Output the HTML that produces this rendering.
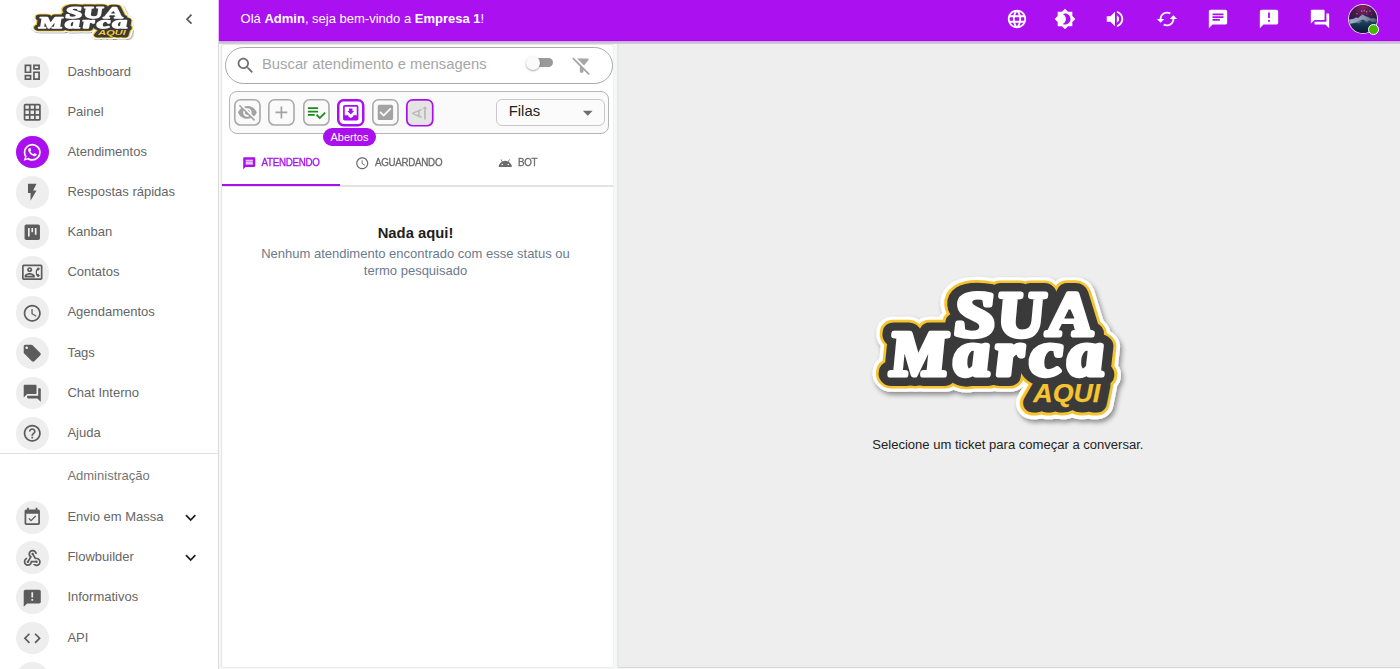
<!DOCTYPE html>
<html lang="pt-BR">
<head>
<meta charset="utf-8">
<title>Atendimentos</title>
<style>
*{box-sizing:border-box;margin:0;padding:0}
html,body{width:1400px;height:669px;overflow:hidden;background:#fff;font-family:"Liberation Sans",sans-serif;}
body{position:relative}
svg{display:block}
/* drawer */
#drawer{position:absolute;left:0;top:0;width:219px;height:669px;background:#fff;border-right:1px solid #dcdcdc;overflow:hidden}
.mi{position:absolute;left:0;width:218px;height:40px}
.mi .av{position:absolute;left:16.200px;top:4.200px;width:32.600px;height:32.600px;border-radius:50%;background:#eeeeee;display:flex;align-items:center;justify-content:center}
.mi .av svg{width:20.500px;height:20.500px;fill:#5c5c5c;margin-left:.3px;margin-top:.3px}
.mi.act .av{background:#aa10ee}
.mi.act .av svg{fill:#fff}
.mi .tx{position:absolute;left:67.400px;top:0;line-height:40px;font-size:13px;color:#666;white-space:nowrap}
.mi .ex{position:absolute;left:180.400px;top:9.700px;width:21.300px;height:21.300px;fill:#222}
#divd{position:absolute;left:0;top:453px;width:218px;height:1px;background:#e0e0e0}
#adm{position:absolute;left:67.400px;top:468px;font-size:13px;color:#757575;line-height:16px}
/* appbar */
#appbar{position:absolute;left:219px;top:0;width:1181px;height:40px;background:#aa10f0}
#ab1,#ab2,#ab3,#ab4{position:absolute;left:219px;width:1181px;height:1px}
#ab1{top:40px;background:#9f10e0}#ab2{top:41px;background:#d9a2f5}#ab3{top:42px;background:#cdbcd8}#ab4{top:43px;background:#cfcfcf}
#hello{position:absolute;left:21.600px;top:0;line-height:38px;font-size:13px;color:#fff;white-space:nowrap}
.tb{position:absolute;top:7.8px;width:22px;height:22px;fill:#fff}
#avatar{position:absolute;left:1130px;top:4.700px;width:28px;height:28px;border-radius:50%;box-shadow:0 0 0 1px #ecccfa;overflow:hidden;background:#345}
#online{position:absolute;left:1149px;top:23.500px;width:11px;height:11px;border-radius:50%;background:#44b700;border:1.500px solid #fff}
/* main */
#main{position:absolute;left:219px;top:42px;width:1181px;height:627px;background:#f6f7f7}
#right{position:absolute;left:398px;top:2px;width:783px;height:624px;background:#eeeeee;border-left:2px solid #e6e8e8;border-bottom:1px solid #d8d8d8}
#tickets{position:absolute;left:2px;top:2px;width:393px;height:623.500px;background:#fff;border:1px solid #e6e6e6;border-right-color:#f0f1f1;border-bottom-color:#ececec;border-radius:3px}

.abs{position:absolute;overflow:visible}
#search{position:absolute;left:225px;top:47px;width:387.500px;height:37px;border:1px solid #a9a9a9;border-radius:19px;background:#fff}
#ph{position:absolute;left:262px;top:45.600px;line-height:36px;font-size:14.8px;color:#a6a6a6;white-space:nowrap}
#swtrack{position:absolute;left:532px;top:58px;width:21px;height:9px;border-radius:4.500px;background:#9a9a9a}
#swthumb{position:absolute;left:526.400px;top:56px;width:14px;height:14px;border-radius:50%;background:#fafafa;box-shadow:0 1px 2px rgba(0,0,0,.35)}
#toolbar{position:absolute;left:229px;top:91px;width:380px;height:43px;border:1px solid #b5b5b5;border-radius:8px;background:#fafafa}
.fb{position:absolute;top:99.200px;width:27px;height:27px;border:1.700px solid #a8a8a8;border-radius:7px;display:flex;align-items:center;justify-content:center}
.fb svg{width:20.500px;height:20.500px;flex:none}
#tip{position:absolute;left:323px;top:128px;width:53px;height:18px;border-radius:9px;background:#aa10ee;color:#fff;font-size:11px;line-height:18px;text-align:center}
#filas{position:absolute;left:496px;top:99px;width:109px;height:27px;border:1px solid #c8c8c8;border-radius:6px;background:#fbfbfb;font-size:14.800px;line-height:23.400px;padding-left:11.800px;color:#222}
.tab{position:absolute;top:156.300px;line-height:14px;font-size:9.800px;color:#6b6b6b;white-space:nowrap;font-weight:400;-webkit-text-stroke:.3px currentColor;letter-spacing:-.3px;transform:scaleY(1.02);transform-origin:0 50%}
#tabline{position:absolute;left:222px;top:184.500px;width:391px;height:2px;background:#e2e2e2}
#tabind{position:absolute;left:222px;top:184px;width:118px;height:2px;background:#aa10ee}
#nada{position:absolute;left:222px;top:224.500px;width:387px;text-align:center;font-size:14.800px;font-weight:700;color:#1e1e1e;line-height:17px}
#nenhum{position:absolute;left:222px;top:244.500px;width:387px;text-align:center;font-size:13px;color:#6b7a8e;line-height:17.200px}
#sel{position:absolute;left:616.400px;top:437px;width:783px;text-align:center;font-size:13.060px;color:#222;line-height:15px}
</style>
</head>
<body>
<div id="main">
  <div id="tickets"></div>
  <div id="right"></div>
</div>
<!--PANEL-->
<div id="search"></div>
<svg class="abs" style="left:235px;top:55.300px;width:21px;height:21px;fill:#727272" viewBox="0 0 24 24"><path d="M15.5 14h-.79l-.28-.27C15.41 12.59 16 11.11 16 9.5 16 5.91 13.09 3 9.5 3S3 5.91 3 9.5 5.91 16 9.5 16c1.610 0 3.090-.59 4.230-1.570l.27.28v.79l5 4.990L20.490 19l-4.990-5zm-6 0C7.010 14 5 11.990 5 9.500S7.010 5 9.500 5 14 7.010 14 9.500 11.990 14 9.500 14z"/></svg>
<div id="ph">Buscar atendimento e mensagens</div>
<div id="swtrack"></div><div id="swthumb"></div>
<svg class="abs" style="left:570.500px;top:55.100px;width:21.300px;height:21.300px;fill:#a6a6a6" viewBox="0 0 24 24"><path d="M19.79 5.61C20.3 4.950 19.830 4 19 4H6.830l7.840 7.840 5.120-6.230zM2.810 2.810 1.390 4.220 10 13v6c0 .55.45 1 1 1h2c.55 0 1-.45 1-1v-2.170l5.780 5.780 1.410-1.410L2.810 2.810z"/></svg>
<div id="toolbar"></div>
<svg class="abs" style="left:233.5px;top:99.10px;width:26.8px;height:26.8px" viewBox="0 0 26.8 26.8"><rect x="0.80" y="0.80" width="25.20" height="25.20" rx="5.7" fill="#fafafa" stroke="#a9a9a9" stroke-width="1.6"/><svg x="3.15" y="3.15" width="20.5" height="20.5" viewBox="0 0 24 24"><path fill="#a3a3a3" d="M12 7c2.76 0 5 2.240 5 5 0 .65-.13 1.260-.36 1.830l2.920 2.920c1.510-1.260 2.700-2.890 3.430-4.750-1.730-4.390-6-7.500-11-7.500-1.400 0-2.740.25-3.980.7l2.160 2.160C10.740 7.130 11.350 7 12 7zM2 4.270l2.280 2.280.46.46C3.080 8.300 1.780 10.020 1 12c1.730 4.390 6 7.500 11 7.500 1.550 0 3.030-.3 4.380-.84l.42.42L19.730 22 21 20.730 3.270 3 2 4.270zM7.530 9.800l1.550 1.550c-.05.21-.08.43-.08.65 0 1.660 1.340 3 3 3 .22 0 .44-.03.65-.08l1.550 1.550c-.67.33-1.410.53-2.200.53-2.760 0-5-2.240-5-5 0-.79.2-1.530.53-2.200zm4.310-.78l3.150 3.150.02-.16c0-1.660-1.340-3-3-3l-.17.010z"/></svg></svg>
<svg class="abs" style="left:267.9px;top:99.10px;width:26.8px;height:26.8px" viewBox="0 0 26.8 26.8"><rect x="0.80" y="0.80" width="25.20" height="25.20" rx="5.7" fill="#fafafa" stroke="#a9a9a9" stroke-width="1.6"/><svg x="3.15" y="3.15" width="20.5" height="20.5" viewBox="0 0 24 24"><path fill="#a3a3a3" d="M19 13h-6v6h-2v-6H5v-2h6V5h2v6h6v2z"/></svg></svg>
<svg class="abs" style="left:302.7px;top:99.10px;width:26.8px;height:26.8px" viewBox="0 0 26.8 26.8"><rect x="0.80" y="0.80" width="25.20" height="25.20" rx="5.7" fill="#fafafa" stroke="#a9a9a9" stroke-width="1.6"/><svg x="3.15" y="3.15" width="20.5" height="20.5" viewBox="0 0 24 24"><path fill="#1a8a1a" d="M14 10H2v2h12v-2zm0-4H2v2h12V6zM2 16h8v-2H2v2zm19.500-4.500L23 13l-6.990 7-4.510-4.500L13 14l3.010 3 5.490-5.500z"/></svg></svg>
<svg class="abs" style="left:336.9px;top:98.75px;width:27.5px;height:27.5px" viewBox="0 0 27.5 27.5"><rect x="1.25" y="1.25" width="25.00" height="25.00" rx="5.2" fill="#ffffff" stroke="#aa10ee" stroke-width="2.5"/><svg x="3.50" y="3.50" width="20.5" height="20.5" viewBox="0 0 24 24"><path fill="#aa10ee" d="M19 3H4.990c-1.110 0-1.980.9-1.980 2L3 19c0 1.100.88 2 1.990 2H19c1.100 0 2-.9 2-2V5c0-1.100-.9-2-2-2zm0 12h-4c0 1.660-1.350 3-3 3s-3-1.340-3-3H4.990V5H19v10zm-3-5h-2V7h-4v3H8l4 4 4-4z"/></svg></svg>
<svg class="abs" style="left:372.1px;top:99.10px;width:26.8px;height:26.8px" viewBox="0 0 26.8 26.8"><rect x="0.80" y="0.80" width="25.20" height="25.20" rx="5.7" fill="#fafafa" stroke="#a9a9a9" stroke-width="1.6"/><svg x="3.15" y="3.15" width="20.5" height="20.5" viewBox="0 0 24 24"><path fill="#a3a3a3" d="M19 3H5c-1.110 0-2 .9-2 2v14c0 1.100.89 2 2 2h14c1.110 0 2-.9 2-2V5c0-1.100-.89-2-2-2zm-9 14l-5-5 1.410-1.410L10 14.170l7.590-7.590L19 8l-9 9z"/></svg></svg>
<svg class="abs" style="left:406.1px;top:98.70px;width:27.6px;height:27.6px" viewBox="0 0 27.6 27.6"><rect x="0.85" y="0.85" width="25.90" height="25.90" rx="5.7" fill="#e4e4e4" stroke="#aa10ee" stroke-width="1.7"/><svg x="3.55" y="3.55" width="20.5" height="20.5" viewBox="0 0 24 24"><path fill="#b9b9b9" d="M3 12v1.500l11 4.750v-2.100l-2.200-.9v-5l2.200-.9v-2.100L3 12zm7 2.620l-5.020-1.870L10 10.880v3.740zm8-10.370l-3 3h2v12.500h2V7.250h2l-3-3z"/></svg></svg>
<div id="tip">Abertos</div>
<div id="filas">Filas</div>
<svg class="abs" style="left:575.800px;top:100.500px;width:23.500px;height:23.500px;fill:#6e6e6e" viewBox="0 0 24 24"><path d="M7 10l5 5 5-5z"/></svg>
<svg class="abs" style="left:241.500px;top:156px;width:14.500px;height:14.500px;fill:#aa10ee" viewBox="0 0 24 24"><path d="M20 2H4c-1.100 0-1.990.9-1.990 2L2 22l4-4h14c1.100 0 2-.9 2-2V4c0-1.100-.9-2-2-2zm-2 12H6v-2h12v2zm0-3H6V9h12v2zm0-3H6V6h12v2z"/></svg>
<div class="tab" style="left:261.500px;color:#aa10ee">ATENDENDO</div>
<svg class="abs" style="left:354.800px;top:156.300px;width:14.500px;height:14.500px;fill:#6b6b6b" viewBox="0 0 24 24"><path d="M11.99 2C6.47 2 2 6.480 2 12s4.470 10 9.990 10C17.520 22 22 17.520 22 12S17.520 2 11.990 2zM12 20c-4.420 0-8-3.580-8-8s3.580-8 8-8 8 3.580 8 8-3.580 8-8 8zm.5-13H11v6l5.250 3.150.75-1.230-4.500-2.670z"/></svg>
<div class="tab" style="left:375px">AGUARDANDO</div>
<svg class="abs" style="left:498px;top:156px;width:14.500px;height:14.500px;fill:#6b6b6b" viewBox="0 0 24 24"><path d="m17.6 9.480 1.840-3.180c.16-.31.04-.69-.26-.85-.29-.15-.65-.06-.83.22l-1.880 3.240c-2.860-1.210-6.080-1.210-8.940 0L5.650 5.670c-.19-.29-.58-.38-.87-.2-.28.18-.37.54-.22.83L6.400 9.480C3.300 11.250 1.280 14.440 1 18h22c-.28-3.560-2.300-6.750-5.400-8.520zM7 15.250c-.69 0-1.250-.56-1.250-1.250s.56-1.250 1.250-1.250 1.250.56 1.250 1.250-.56 1.250-1.250 1.250zm10 0c-.69 0-1.250-.56-1.250-1.250s.56-1.250 1.250-1.250 1.250.56 1.250 1.250-.56 1.250-1.250 1.250z"/></svg>
<div class="tab" style="left:518px">BOT</div>
<div id="tabline"></div><div id="tabind"></div>
<div id="nada">Nada aqui!</div>
<div id="nenhum">Nenhum atendimento encontrado com esse status ou<br>termo pesquisado</div>
<div id="sel">Selecione um ticket para começar a conversar.</div>
<svg width="0" height="0" style="position:absolute"><defs>
<filter id="lsh" x="-10%" y="-10%" width="120%" height="125%"><feGaussianBlur in="SourceAlpha" stdDeviation="2.8"/><feOffset dx="1.500" dy="2.500" result="b"/><feComponentTransfer><feFuncA type="linear" slope=".42"/></feComponentTransfer><feMerge><feMergeNode/><feMergeNode in="SourceGraphic"/></feMerge></filter>
<g id="lgtxt" font-family="Liberation Serif, serif" font-weight="700" font-style="italic" stroke-linejoin="round" stroke-linecap="round">
<text x="955.70" y="336.05" font-size="64.0" textLength="41.5" lengthAdjust="spacingAndGlyphs" transform="translate(0,336.05) skewX(5) translate(0,-336.05)">S</text>
<text x="999.05" y="336.05" font-size="64.0" textLength="47.4" lengthAdjust="spacingAndGlyphs" transform="translate(0,336.05) skewX(5) translate(0,-336.05)">U</text>
<text x="1049.70" y="334.85" font-size="62.2" textLength="45.2" lengthAdjust="spacingAndGlyphs" transform="translate(0,334.85) skewX(5) translate(0,-334.85)">A</text>
<text x="890.95" y="374.85" font-size="63.5" textLength="58.8" lengthAdjust="spacingAndGlyphs" transform="translate(0,374.85) skewX(5) translate(0,-374.85)">M</text>
<text x="955.15" y="374.85" font-size="63.5" textLength="36.0" lengthAdjust="spacingAndGlyphs" transform="translate(0,374.85) skewX(5) translate(0,-374.85)">a</text>
<text x="997.25" y="374.85" font-size="63.5" textLength="28.2" lengthAdjust="spacingAndGlyphs" transform="translate(0,374.85) skewX(5) translate(0,-374.85)">r</text>
<text x="1031.45" y="374.85" font-size="63.5" textLength="32.8" lengthAdjust="spacingAndGlyphs" transform="translate(0,374.85) skewX(5) translate(0,-374.85)">c</text>
<text x="1068.95" y="374.85" font-size="63.5" textLength="36.2" lengthAdjust="spacingAndGlyphs" transform="translate(0,374.85) skewX(5) translate(0,-374.85)">a</text>
</g>
<g id="lgaqui" font-family="Liberation Sans, sans-serif" font-weight="700" font-style="italic" stroke-linejoin="round" stroke-linecap="round">
<text x="1033.300" y="402.300" font-size="26.300" textLength="67" lengthAdjust="spacingAndGlyphs">AQUI</text>
</g>
<g id="lgaqub" font-family="Liberation Sans, sans-serif" font-weight="700" font-style="italic" stroke-linejoin="round" stroke-linecap="round">
<text x="1033.300" y="403.100" font-size="26.300" textLength="67" lengthAdjust="spacingAndGlyphs">AOUI</text>
</g>
<g id="logo">
<g filter="url(#lsh)"><use href="#lgtxt" fill="#fff" stroke="#fff" stroke-width="33.600"/><use href="#lgaqub" fill="#fff" stroke="#fff" stroke-width="32.500"/></g>
<use href="#lgtxt" fill="#f6c431" stroke="#f6c431" stroke-width="27.200"/><use href="#lgaqub" fill="#f6c431" stroke="#f6c431" stroke-width="25"/>
<use href="#lgtxt" fill="#3a3a3a" stroke="#3a3a3a" stroke-width="22"/><use href="#lgaqub" fill="#3a3a3a" stroke="#3a3a3a" stroke-width="19"/>
<use href="#lgtxt" fill="#fff" stroke="#fff" stroke-width="5.200"/>
<path d="M1070 309.800 L1065 318 H1073.700 Z" fill="#3a3a3a" stroke="#3a3a3a" stroke-width="1.200" stroke-linejoin="round"/>
<use href="#lgaqui" fill="#f6c431" stroke="#f6c431" stroke-width=".25"/>
</g>
</defs></svg>
<svg id="biglogo" viewBox="860 265 280 170" width="280" height="170" style="position:absolute;left:860px;top:265px;overflow:visible"><use href="#logo"/></svg>
<!--/PANEL-->
<div id="ab1"></div><div id="ab2"></div><div id="ab3"></div><div id="ab4"></div>
<div id="appbar">
  <div id="hello">Olá <b>Admin</b>, seja bem-vindo a <b>Empresa 1</b>!</div>
<svg class="tb" style="left:787.1px" viewBox="0 0 24 24"><path d="M11.99 2C6.47 2 2 6.48 2 12s4.47 10 9.99 10C17.52 22 22 17.52 22 12S17.52 2 11.99 2zm6.93 6h-2.95c-.32-1.25-.78-2.45-1.38-3.56 1.84.63 3.37 1.91 4.33 3.56zM12 4.040c.83 1.200 1.480 2.530 1.910 3.960h-3.820c.43-1.430 1.080-2.760 1.910-3.960zM4.260 14C4.100 13.360 4 12.690 4 12s.1-1.360.26-2h3.380c-.08.66-.14 1.320-.14 2 0 .68.06 1.340.14 2H4.260zm.82 2h2.950c.32 1.250.78 2.450 1.380 3.560-1.840-.63-3.370-1.900-4.330-3.560zm2.950-8H5.080c.96-1.660 2.490-2.930 4.330-3.560C8.810 5.550 8.350 6.750 8.030 8zM12 19.960c-.83-1.200-1.480-2.530-1.910-3.960h3.820c-.43 1.430-1.080 2.760-1.910 3.960zM14.340 14H9.660c-.09-.66-.16-1.320-.16-2 0-.68.07-1.350.16-2h4.680c.09.65.16 1.320.16 2 0 .68-.07 1.340-.16 2zm.25 5.560c.6-1.110 1.060-2.310 1.380-3.560h2.950c-.96 1.650-2.490 2.930-4.330 3.560zM16.360 14c.08-.66.14-1.320.14-2 0-.68-.06-1.340-.14-2h3.380c.16.64.26 1.310.26 2s-.1 1.360-.26 2h-3.380z"/></svg>
<svg class="tb" style="left:834.6px" viewBox="0 0 24 24"><path d="M20 8.690V4h-4.690L12 .69 8.690 4H4v4.690L.69 12 4 15.310V20h4.690L12 23.310 15.310 20H20v-4.690L23.310 12 20 8.690zM12 18c-.89 0-1.740-.2-2.500-.55C11.560 16.500 13 14.420 13 12s-1.440-4.500-3.500-5.450C10.260 6.200 11.110 6 12 6c3.310 0 6 2.690 6 6s-2.690 6-6 6z"/></svg>
<svg class="tb" style="left:885.3px" viewBox="0 0 24 24"><path d="M3 9v6h4l5 5V4L7 9H3zm13.5 3c0-1.770-1.020-3.290-2.500-4.030v8.050c1.480-.73 2.500-2.250 2.500-4.020zM14 3.230v2.060c2.890.86 5 3.540 5 6.710s-2.110 5.850-5 6.710v2.060c4.010-.91 7-4.490 7-8.770s-2.990-7.860-7-8.770z"/></svg>
<svg class="tb" style="left:936.6px" viewBox="0 0 24 24"><path d="M19 8l-4 4h3c0 3.310-2.690 6-6 6-1.010 0-1.970-.25-2.800-.7l-1.460 1.460C8.970 19.540 10.430 20 12 20c4.420 0 8-3.580 8-8h3l-4-4zM6 12c0-3.310 2.690-6 6-6 1.010 0 1.970.25 2.800.7l1.460-1.460C15.030 4.460 13.570 4 12 4c-4.420 0-8 3.580-8 8H1l4 4 4-4H6z"/></svg>
<svg class="tb" style="left:987.5px" viewBox="0 0 24 24"><path d="M20 2H4c-1.100 0-1.990.9-1.990 2L2 22l4-4h14c1.100 0 2-.9 2-2V4c0-1.100-.9-2-2-2zM6 9h12v2H6V9zm8 5H6v-2h8v2zm4-6H6V6h12v2z"/></svg>
<svg class="tb" style="left:1038.8px" viewBox="0 0 24 24"><path d="M20 2H4c-1.100 0-1.990.9-1.990 2L2 22l4-4h14c1.100 0 2-.9 2-2V4c0-1.100-.9-2-2-2zm-7 9h-2V5h2v6zm0 4h-2v-2h2v2z"/></svg>
<svg class="tb" style="left:1089.6px" viewBox="0 0 24 24"><path d="M21 6h-2v9H6v2c0 .55.45 1 1 1h11l4 4V7c0-.55-.45-1-1-1zm-4 6V3c0-.55-.45-1-1-1H3c-.55 0-1 .45-1 1v14l4-4h10c.55 0 1-.45 1-1z"/></svg>
<div id="avatar"><svg viewBox="0 0 28 28" width="28" height="28"><defs><clipPath id="avc"><circle cx="14" cy="14" r="14"/></clipPath><radialGradient id="sky" cx=".5" cy=".08" r=".55"><stop offset="0" stop-color="#8a2262"/><stop offset=".6" stop-color="#4a1a4c"/><stop offset="1" stop-color="#2e1a42"/></radialGradient><linearGradient id="mnt" x1="0" y1="0" x2="1" y2="0"><stop offset="0" stop-color="#a3aec6"/><stop offset=".55" stop-color="#8797b0"/><stop offset="1" stop-color="#3d5873"/></linearGradient><linearGradient id="low" x1="0" y1="0" x2="0" y2="1"><stop offset="0" stop-color="#2b4a66"/><stop offset=".5" stop-color="#12304b"/><stop offset="1" stop-color="#0b1c36"/></linearGradient></defs><g clip-path="url(#avc)"><rect width="28" height="28" fill="url(#sky)"/><path d="M0 14.500 L4 14 L7 12.500 L9 13 L12 10.500 L14 9.700 L16 11 L19 12 L22 13.500 L25 13 L28 14.500 V22 H0z" fill="url(#mnt)"/><path d="M0 19 L4 18.200 L8 17.300 L11 15.500 L14 14.500 L17 16 L21 15.500 L24 17 L28 16.500 V28 H0z" fill="url(#low)"/><path d="M7 17.800 L11 15.500 L13 16 L10 18.500z M15 15.500 L18 17.500 L20 17 L17 16z" fill="#7f93ad" opacity=".6"/><g fill="#f4e8ff"><circle cx="12.800" cy="6" r=".55"/><circle cx="15.200" cy="5.800" r=".5"/><circle cx="17.800" cy="6.800" r=".55"/><circle cx="21" cy="6" r=".5"/><circle cx="8" cy="8.800" r=".5"/><circle cx="13" cy="9.200" r=".35"/><circle cx="18" cy="9" r=".35"/><circle cx="22.500" cy="9.800" r=".3"/></g></g></svg></div><div id="online"></div>
</div>
<div id="drawer">
<!--SIDE-->
<svg style="position:absolute;left:0;top:0;overflow:visible" width="218" height="48"><defs><filter id="sblur" x="-5%" y="-10%" width="110%" height="120%"><feGaussianBlur stdDeviation=".38"/></filter></defs><g filter="url(#sblur)"><g transform="translate(-329.1,-68.200) scale(.4135,.2564)"><use href="#logo"/></g></g></svg>
<svg class="abs" style="left:179px;top:9.100px;width:20.400px;height:20.400px;fill:#5a5a5a" viewBox="0 0 24 24"><path d="M15.410 7.410L14 6l-6 6 6 6 1.410-1.410L10.830 12z"/></svg>

<div class="mi" style="top:51.6px"><div class="av"><svg viewBox="0 0 24 24"><path d="M19 5v2h-4V5h4M9 5v6H5V5h4m10 8v6h-4v-6h4M9 17v2H5v-2h4M21 3h-8v6h8V3zM11 3H3v10h8V3zm10 8h-8v10h8V11zm-10 4H3v6h8v-6z"/></svg></div><div class="tx">Dashboard</div></div>
<div class="mi" style="top:91.5px"><div class="av"><svg viewBox="0 0 24 24"><path d="M20 2H4c-1.1 0-2 .9-2 2v16c0 1.1.9 2 2 2h16c1.1 0 2-.9 2-2V4c0-1.1-.9-2-2-2zM8 20H4v-4h4v4zm0-6H4v-4h4v4zm0-6H4V4h4v4zm6 12h-4v-4h4v4zm0-6h-4v-4h4v4zm0-6h-4V4h4v4zm6 12h-4v-4h4v4zm0-6h-4v-4h4v4zm0-6h-4V4h4v4z"/></svg></div><div class="tx">Painel</div></div>
<div class="mi act" style="top:131.6px"><div class="av"><svg viewBox="0 0 24 24"><path d="M16.75 13.96c.25.13.41.2.46.3.06.11.04.61-.21 1.18-.2.56-1.24 1.1-1.7 1.12-.46.02-.47.36-2.96-.73-2.49-1.09-3.99-3.75-4.11-3.92-.12-.17-.96-1.38-.92-2.61.05-1.22.69-1.8.95-2.04.24-.26.51-.29.68-.26h.47c.15 0 .36-.06.55.45l.69 1.87c.06.13.1.28.01.44l-.27.41-.39.42c-.12.12-.26.25-.12.5.12.26.62 1.09 1.32 1.78.91.88 1.71 1.17 1.95 1.3.24.14.39.12.54-.04l.81-.94c.19-.25.35-.19.58-.11l1.67.88M12 2a10 10 0 0 1 10 10 10 10 0 0 1-10 10c-1.97 0-3.8-.57-5.35-1.55L2 22l1.55-4.65A9.969 9.969 0 0 1 2 12 10 10 0 0 1 12 2m0 2a8 8 0 0 0-8 8c0 1.72.54 3.31 1.46 4.61L4.5 19.5l2.89-.96A7.95 7.95 0 0 0 12 20a8 8 0 0 0 8-8 8 8 0 0 0-8-8z"/></svg></div><div class="tx">Atendimentos</div></div>
<div class="mi" style="top:171.8px"><div class="av"><svg viewBox="0 0 24 24"><path d="M7 2v11h3v9l7-12h-4l4-8z"/></svg></div><div class="tx">Respostas rápidas</div></div>
<div class="mi" style="top:212.0px"><div class="av"><svg viewBox="0 0 24 24"><path d="M19 3H5c-1.1 0-2 .9-2 2v14c0 1.1.9 2 2 2h14c1.1 0 2-.9 2-2V5c0-1.1-.9-2-2-2zM9 17H7V7h2v10zm4-5h-2V7h2v5zm4 3h-2V7h2v8z"/></svg></div><div class="tx">Kanban</div></div>
<div class="mi" style="top:252.1px"><div class="av"><svg viewBox="0 0 24 24"><path d="M22 3H2C.9 3 0 3.900 0 5v14c0 1.100.9 2 2 2h20c1.100 0 1.990-.9 1.990-2L24 5c0-1.100-.9-2-2-2zm0 16H2V5h20v14zm-2.990-1.010L21 16l-1.510-2h-1.640c-.22-.63-.35-1.300-.35-2s.13-1.370.35-2h1.640L21 8l-1.990-1.990c-1.310.98-2.280 2.370-2.730 3.990-.18.64-.28 1.310-.28 2s.1 1.360.28 2c.45 1.610 1.420 3.010 2.730 3.990zM9 12c1.650 0 3-1.350 3-3s-1.350-3-3-3-3 1.350-3 3 1.350 3 3 3zm0-4c.55 0 1 .45 1 1s-.45 1-1 1-1-.45-1-1 .45-1 1-1zm6 8.590c0-2.500-3.970-3.580-6-3.580s-6 1.080-6 3.580V18h12v-1.410zM5.480 16c.74-.5 2.220-1 3.520-1s2.770.49 3.520 1H5.480z"/></svg></div><div class="tx">Contatos</div></div>
<div class="mi" style="top:292.3px"><div class="av"><svg viewBox="0 0 24 24"><path d="M11.99 2C6.47 2 2 6.48 2 12s4.47 10 9.990 10C17.520 22 22 17.520 22 12S17.520 2 11.990 2zM12 20c-4.420 0-8-3.580-8-8s3.580-8 8-8 8 3.580 8 8-3.580 8-8 8zm.5-13H11v6l5.250 3.150.75-1.230-4.500-2.670z"/></svg></div><div class="tx">Agendamentos</div></div>
<div class="mi" style="top:332.5px"><div class="av"><svg viewBox="0 0 24 24"><path d="M21.410 11.580l-9-9C12.050 2.220 11.550 2 11 2H4c-1.100 0-2 .9-2 2v7c0 .55.22 1.050.59 1.420l9 9c.36.36.86.58 1.410.58.55 0 1.050-.22 1.410-.59l7-7c.37-.36.59-.86.59-1.410 0-.55-.23-1.060-.59-1.420zM5.500 7C4.670 7 4 6.330 4 5.500S4.670 4 5.500 4 7 4.670 7 5.500 6.330 7 5.500 7z"/></svg></div><div class="tx">Tags</div></div>
<div class="mi" style="top:372.6px"><div class="av"><svg viewBox="0 0 24 24"><path d="M21 6h-2v9H6v2c0 .55.45 1 1 1h11l4 4V7c0-.55-.45-1-1-1zm-4 6V3c0-.55-.45-1-1-1H3c-.55 0-1 .45-1 1v14l4-4h10c.55 0 1-.45 1-1z"/></svg></div><div class="tx">Chat Interno</div></div>
<div class="mi" style="top:412.8px"><div class="av"><svg viewBox="0 0 24 24"><path d="M11 18h2v-2h-2v2zm1-16C6.480 2 2 6.480 2 12s4.480 10 10 10 10-4.480 10-10S17.520 2 12 2zm0 18c-4.410 0-8-3.590-8-8s3.590-8 8-8 8 3.590 8 8-3.590 8-8 8zm0-14c-2.210 0-4 1.790-4 4h2c0-1.100.9-2 2-2s2 .9 2 2c0 2-3 1.750-3 5h2c0-2.250 3-2.500 3-5 0-2.210-1.790-4-4-4z"/></svg></div><div class="tx">Ajuda</div></div>
<div class="mi" style="top:497.0px"><div class="av"><svg viewBox="0 0 24 24"><path d="M16.530 11.060L15.470 10l-4.880 4.880-2.120-2.120-1.060 1.060L10.590 17l5.940-5.940zM19 3h-1V1h-2v2H8V1H6v2H5c-1.110 0-1.990.9-1.990 2L3 19c0 1.100.89 2 2 2h14c1.100 0 2-.9 2-2V5c0-1.100-.9-2-2-2zm0 16H5V8h14v11z"/></svg></div><div class="tx">Envio em Massa</div><svg class="ex" viewBox="0 0 24 24"><path d="M16.59 8.59L12 13.17 7.41 8.59 6 10l6 6 6-6z"/></svg></div>
<div class="mi" style="top:537.2px"><div class="av"><svg viewBox="0 0 24 24"><path d="M10 15h5.880c.27-.31.67-.5 1.120-.5.83 0 1.500.67 1.500 1.500s-.67 1.500-1.500 1.500c-.44 0-.84-.19-1.120-.5H11.900c-.46 2.280-2.480 4-4.900 4-2.760 0-5-2.240-5-5 0-2.420 1.720-4.440 4-4.900v2.070C4.840 13.580 4 14.700 4 16c0 1.650 1.350 3 3 3s3-1.350 3-3v-1zm2.500-11c1.650 0 3 1.350 3 3h2c0-2.760-2.240-5-5-5s-5 2.240-5 5c0 1.430.6 2.710 1.550 3.620l-2.350 3.900c-.68.14-1.200.75-1.200 1.480 0 .83.67 1.500 1.500 1.500s1.500-.67 1.500-1.500c0-.16-.02-.31-.07-.45l3.380-5.630C10.490 9.610 9.500 8.420 9.500 7c0-1.650 1.350-3 3-3zm4.500 9c-.64 0-1.230.2-1.720.54l-3.050-5.070C11.530 8.350 11 7.740 11 7c0-.83.67-1.500 1.500-1.500S14 6.170 14 7c0 .16-.02.31-.07.45l2.350 3.900c.24-.03.48-.05.72-.05 2.760 0 5 2.240 5 5s-2.240 5-5 5c-1.850 0-3.470-1.010-4.330-2.500h2.670c.48.320 1.050.5 1.660.5 1.650 0 3-1.350 3-3s-1.350-3-3-3z"/></svg></div><div class="tx">Flowbuilder</div><svg class="ex" viewBox="0 0 24 24"><path d="M16.59 8.59L12 13.17 7.41 8.59 6 10l6 6 6-6z"/></svg></div>
<div class="mi" style="top:577.3px"><div class="av"><svg viewBox="0 0 24 24"><path d="M20 2H4c-1.100 0-1.990.9-1.990 2L2 22l4-4h14c1.100 0 2-.9 2-2V4c0-1.100-.9-2-2-2zm-7 9h-2V5h2v6zm0 4h-2v-2h2v2z"/></svg></div><div class="tx">Informativos</div></div>
<div class="mi" style="top:617.5px"><div class="av"><svg viewBox="0 0 24 24"><path d="M9.4 16.6L4.8 12l4.600-4.600L8 6l-6 6 6 6 1.400-1.400zm5.200 0l4.600-4.600-4.600-4.600L16 6l6 6-6 6-1.400-1.400z"/></svg></div><div class="tx">API</div></div>
<div class="mi" style="top:657.7px"><div class="av"><svg viewBox="0 0 24 24"><path d="M9.4 16.6L4.8 12l4.600-4.600L8 6l-6 6 6 6 1.400-1.400zm5.200 0l4.600-4.600-4.600-4.600L16 6l6 6-6 6-1.400-1.400z"/></svg></div></div>
<div id="divd"></div><div id="adm">Administração</div>
<!--/SIDE-->
</div>
<div style="position:absolute;left:218px;top:0;width:1px;height:41px;background:#e6b8fa"></div>
</body>
</html>
